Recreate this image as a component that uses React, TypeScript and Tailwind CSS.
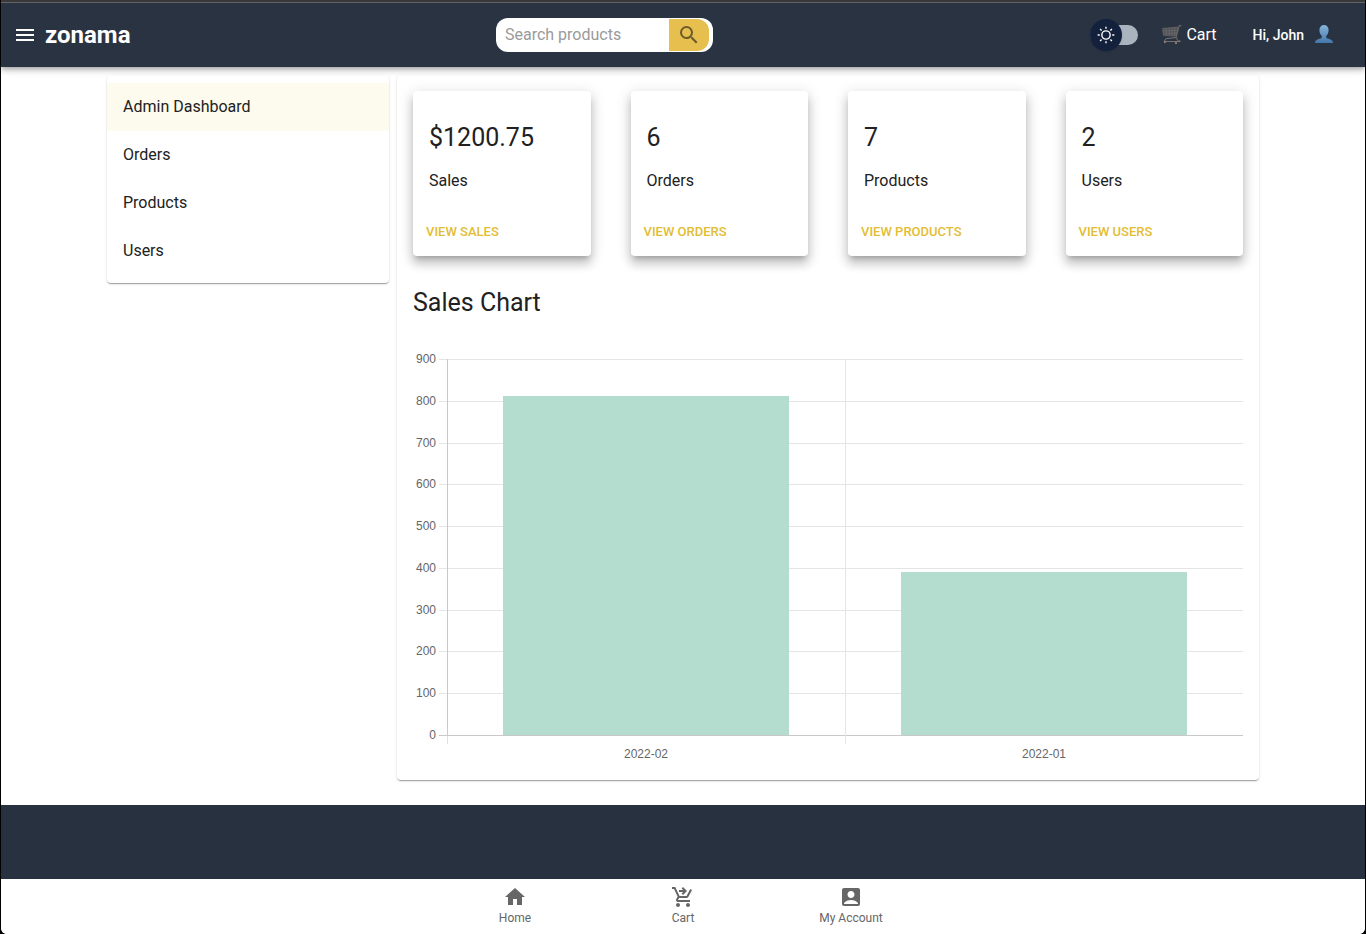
import { useState } from "react"
import { MdAccountBox, MdHome, MdMenu, MdSearch, MdShoppingCartCheckout } from "react-icons/md"

const MENU = ["Admin Dashboard", "Orders", "Products", "Users"]

const SUMMARY = [
    { value: "$1200.75", label: "Sales", link: "View sales" },
    { value: "6", label: "Orders", link: "View orders" },
    { value: "7", label: "Products", link: "View products" },
    { value: "2", label: "Users", link: "View users" },
]

const SALES = [
    { month: "2022-02", total: 811 },
    { month: "2022-01", total: 389 },
]

const NAV = [
    { label: "Home", icon: MdHome },
    { label: "Cart", icon: MdShoppingCartCheckout },
    { label: "My Account", icon: MdAccountBox },
]

function CartIcon() {
    return (
        <svg viewBox="0 0 20 20" className="w-5 h-5" fill="none" aria-hidden="true">
            <path d="M.5 3.500 16 2 14.500 11 1.500 10.500Z" fill="#505256" />
            <path d="M.5 3.500 16 2 14.500 11 1.500 10.500ZM.8 6l14.800-.8M1.200 8.300l13.800-.1M3.800 3.200l.7 7.400M7 2.900l.4 7.900M10 2.600v8.300M13 2.300l-.6 8.700" stroke="#6f6f72" strokeWidth=".6" />
            <path d="M19.300.6h-2L14 12.500l2.500 4" stroke="#6d655f" strokeWidth="1.100" />
            <path d="M14.500 12.500 4 13.600 2 16.500h15" stroke="#77736f" strokeWidth="1" />
            <circle cx="3" cy="17" r="1.200" fill="#8c7668" />
            <circle cx="14" cy="18" r="1.200" fill="#8c7668" />
            <circle cx="17.500" cy="16.300" r="1" fill="#8c7668" />
        </svg>
    )
}

function PersonIcon() {
    return (
        <svg viewBox="0 0 20 20" className="w-5 h-5" aria-hidden="true">
            <defs>
                <linearGradient id="person" x1="0" y1="0" x2="0" y2="1">
                    <stop offset="0" stopColor="#86b4da" />
                    <stop offset="1" stopColor="#4478ab" />
                </linearGradient>
            </defs>
            <path d="M10 0C7.200 0 5.400 2 5.400 5c0 2.500.9 4.600 2.300 5.800v2C7.400 14.300 1 13.500 1 18h18c0-4.500-6.400-3.700-6.700-5.200v-2C13.700 9.600 14.600 7.500 14.600 5c0-3-1.800-5-4.600-5Z" fill="url(#person)" />
        </svg>
    )
}

function ThemeSwitch() {
    const [light, setLight] = useState(true)

    return (
        <label className="flex items-center w-12 h-8 cursor-pointer">
            <input
                type="checkbox"
                role="switch"
                aria-label="Light mode"
                className="sr-only"
                checked={light}
                onChange={() => setLight(!light)}
            />
            <span className="flex items-center w-full h-5 rounded-full bg-[#aab4be]">
                <span className="flex items-center justify-center w-8 h-8 rounded-full bg-[#14213d] shadow-sm shrink-0">
                    <svg viewBox="0 0 20 20" className="w-5 h-5" fill="#fff" aria-hidden="true">
                        <path d="M9.305 1.667V3.750h1.389V1.667h-1.390zm-4.707 1.950l-.982.982L5.090 6.072l.982-.982-1.473-1.473zm10.802 0L13.927 5.090l.982.982 1.473-1.473-.982-.982zM10 5.139a4.872 4.872 0 00-4.862 4.860A4.872 4.872 0 0010 14.862 4.872 4.872 0 0014.860 10 4.872 4.872 0 0010 5.139zm0 1.389A3.462 3.462 0 0113.471 10a3.462 3.462 0 01-3.473 3.472A3.462 3.462 0 016.527 10 3.462 3.462 0 0110 6.528zM1.665 9.305v1.390h2.083v-1.390H1.666zm14.583 0v1.390h2.084v-1.390h-2.084zM5.090 13.928L3.616 15.400l.982.982 1.473-1.473-.982-.982zm9.820 0l-.982.982 1.473 1.473.982-.982-1.473-1.473zM9.305 16.250v2.083h1.389V16.250h-1.390z" />
                    </svg>
                </span>
            </span>
        </label>
    )
}

function Header() {
    return (
        <header className="relative z-10 flex items-center justify-between h-16 pl-3 pr-[27px] bg-[#2a3342] text-white shadow-[0_2px_4px_-1px_rgba(0,0,0,0.2),0_4px_5px_rgba(0,0,0,0.14),0_1px_10px_rgba(0,0,0,0.12)]">
            <div className="flex items-center gap-2">
                <button type="button" aria-label="Open menu">
                    <MdMenu className="w-6 h-6" />
                </button>
                <a href="#" className="text-2xl font-bold">zonama</a>
            </div>

            <form className="flex w-[217px] p-px pr-1 rounded-xl bg-white" onSubmit={e => e.preventDefault()}>
                <input
                    type="text"
                    aria-label="Search products"
                    placeholder="Search products"
                    className="flex-1 min-w-0 pl-2 text-base text-black/85 placeholder:text-[#9a9a9a] outline-none"
                />
                <button type="submit" aria-label="Search" className="flex items-center justify-center w-10 h-8 rounded-r-xl bg-[#e7bf4f] text-[#6b5a2b]">
                    <MdSearch className="w-6 h-6" />
                </button>
            </form>

            <div className="flex items-center pl-3">
                <ThemeSwitch />
                <a href="#" className="flex items-center gap-1 ml-6">
                    <CartIcon />
                    Cart
                </a>
                <button type="button" className="flex items-center gap-[10px] ml-9 mr-1 text-sm font-medium">
                    Hi, John
                    <PersonIcon />
                </button>
            </div>
        </header>
    )
}

function SalesChart() {
    const ticks = [900, 800, 700, 600, 500, 400, 300, 200, 100, 0]
    const base = 385
    const scale = 376 / 900

    return (
        <svg viewBox="0 0 830 415" className="w-full h-auto font-['Liberation_Sans',Arial,sans-serif] text-xs" role="img" aria-label="Sales Chart">
            {/* Horizontal grid */}
            {ticks.map(tick => {
                const y = Math.round(base - tick * scale)
                return (
                    <g key={tick}>
                        <rect x="26" y={y} width="804" height="1" fill={tick === 0 ? "#c9c9c9" : "#e5e5e5"} />
                        <text x="23" y={y + 4} textAnchor="end" fill="#666">{tick}</text>
                    </g>
                )
            })}

            {/* Vertical grid */}
            <rect x="34" y="9" width="1" height="385" fill="#e0e0e0" />
            <rect x="34" y="9" width="1" height="377" fill="#c9c9c9" />
            <rect x="432" y="9" width="1" height="385" fill="#e5e5e5" />

            {SALES.map((sale, i) => {
                const x = 90 + i * 398
                const height = Math.round(sale.total * scale)
                return (
                    <g key={sale.month}>
                        <rect x={x} y={base - height} width="286" height={height} fill="#b4ddcf" />
                        <text x={x + 143} y="408" textAnchor="middle" fill="#666">{sale.month}</text>
                    </g>
                )
            })}
        </svg>
    )
}

export default function App() {
    return (
        <div className="min-h-screen px-px bg-black font-[Roboto,sans-serif]">
            <div className="flex flex-col min-h-screen bg-white rounded-b-md overflow-hidden text-[#212121]">
                <div className="h-[3px] shrink-0 bg-[#3a3a3a] border-b border-[#6b6b6b]" />
                <Header />

                <main className="grid grid-cols-4 items-start gap-2 w-full max-w-6xl mx-auto pt-2 pb-[25px]">
                    <nav className="py-2 rounded-sm bg-white shadow-[0_2px_1px_-1px_rgba(0,0,0,0.2),0_1px_1px_rgba(0,0,0,0.14),0_1px_3px_rgba(0,0,0,0.12)]">
                        <ul>
                            {MENU.map((item, i) => (
                                <li key={item}>
                                    <a href="#" className={`flex items-center h-12 px-4 ${i === 0 ? "bg-[#fdfbee]" : ""}`}>{item}</a>
                                </li>
                            ))}
                        </ul>
                    </nav>

                    <section className="col-span-3 p-4 pb-[15px] rounded-sm bg-white shadow-[0_2px_1px_-1px_rgba(0,0,0,0.2),0_1px_1px_rgba(0,0,0,0.14),0_1px_3px_rgba(0,0,0,0.12)]">
                        <div className="grid grid-cols-4 gap-10">
                            {SUMMARY.map(card => (
                                <div key={card.label} className="rounded-sm bg-white shadow-[0_5px_5px_-3px_rgba(0,0,0,0.2),0_8px_10px_1px_rgba(0,0,0,0.14),0_3px_14px_2px_rgba(0,0,0,0.12)]">
                                    <div className="px-4 pt-8 pb-4">
                                        <h2 className="mb-4 text-[25px] leading-[30px]">{card.value}</h2>
                                        <p>{card.label}</p>
                                    </div>
                                    <div className="p-2">
                                        <a href="#" className="flex items-center h-[31px] px-[5px] pb-0.5 text-[13px] font-medium uppercase text-[#e2bd33]">{card.link}</a>
                                    </div>
                                </div>
                            ))}
                        </div>

                        <h1 className="py-8 text-[25px] leading-[30px]">Sales Chart</h1>
                        <SalesChart />
                    </section>
                </main>

                <footer className="h-[74px] shrink-0 bg-[#28313f]" />

                <nav className="flex justify-center flex-1 min-h-[55px] bg-white text-[#666]">
                    {NAV.map(({ label, icon: Icon }) => (
                        <a key={label} href="#" className="flex flex-col items-center w-[168px] pt-[6px] text-xs">
                            <Icon className="w-6 h-6" />
                            <span className="leading-[18px]">{label}</span>
                        </a>
                    ))}
                </nav>
            </div>
        </div>
    )
}
